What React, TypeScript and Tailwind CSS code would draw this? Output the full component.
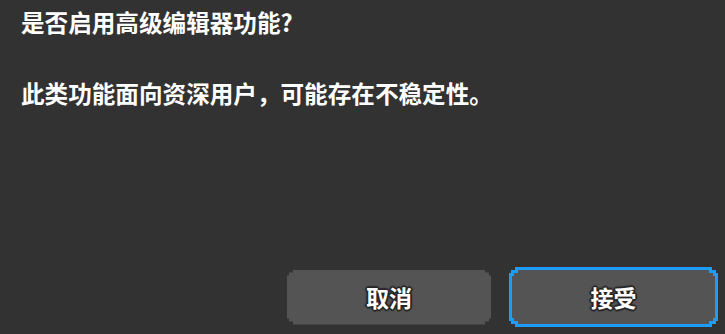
import React from 'react';

const stair =
  '[clip-path:polygon(6px_0,calc(100%-6px)_0,calc(100%-6px)_3px,calc(100%-2px)_3px,calc(100%-2px)_6px,100%_6px,100%_calc(100%-6px),calc(100%-2px)_calc(100%-6px),calc(100%-2px)_calc(100%-3px),calc(100%-6px)_calc(100%-3px),calc(100%-6px)_100%,6px_100%,6px_calc(100%-3px),2px_calc(100%-3px),2px_calc(100%-6px),0_calc(100%-6px),0_6px,2px_6px,2px_3px,6px_3px)]';

const outline =
  '[text-shadow:1px_0_0_#262626,-1px_0_0_#262626,0_1px_0_#262626,0_-1px_0_#262626,1px_1px_0_#262626,-1px_-1px_0_#262626,1px_-1px_0_#262626,-1px_1px_0_#262626,2px_0_1px_#2a2a2a,-2px_0_1px_#2a2a2a,0_2px_1px_#2a2a2a,0_-2px_1px_#2a2a2a]';

const App: React.FC = () => {
  return (
    <div className="w-[725px] h-[334px] bg-[#323232] flex flex-col font-['Noto_Sans_CJK_SC',sans-serif] text-white font-bold">
      <div className="pl-[21px] pt-[6px] flex-1">
        <h1 className="text-[23.6px] leading-[32px]">是否启用高级编辑器功能?</h1>
        <p className="text-[23.6px] leading-[32px] mt-[39px]">此类功能面向资深用户，可能存在不稳定性。</p>
      </div>
      <div className="flex items-center justify-end gap-[18px] pr-[7px] pb-[7px]">
        <button className={`w-[204px] h-[55px] bg-[#545454] ${stair} flex items-center justify-center`}>
          <span className={`text-[23px] leading-none ${outline}`}>取消</span>
        </button>
        <div className={`w-[209px] h-[60px] bg-[#1e9df8] p-[3px] ${stair}`}>
          <button className={`w-full h-full bg-[#545454] ${stair} flex items-center justify-center`}>
            <span className={`text-[23px] leading-none ${outline}`}>接受</span>
          </button>
        </div>
      </div>
    </div>
  );
};

export default App;
